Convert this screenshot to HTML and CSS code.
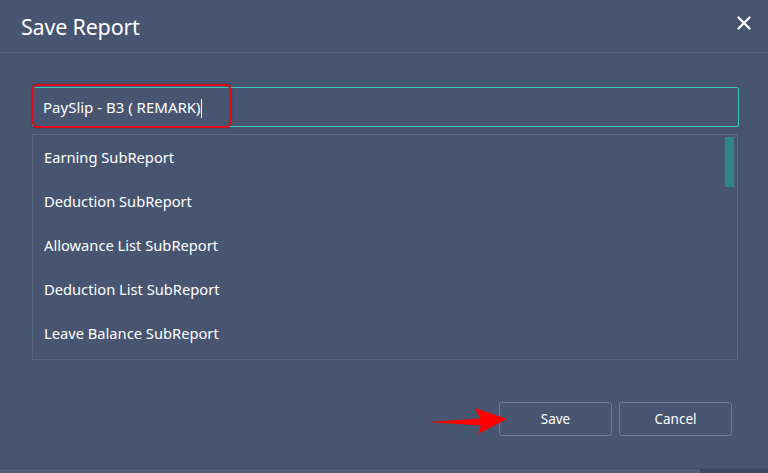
FILE: index.html
```html
<!DOCTYPE html>
<html lang="en">
<head>
    <meta charset="UTF-8">
    <meta name="viewport" content="width=device-width, initial-scale=1.0">
    <title>Save Report</title>
    <link rel="stylesheet" href="styles.css">
</head>
<body>
    <div class="dialog">
        <div class="dialog-header">
            <h2>Save Report</h2>
            <button class="close-btn" aria-label="Close">
                <svg width="14" height="14" viewBox="0 0 14 14">
                    <path d="M1.5 1.5 L12.5 12.5 M12.5 1.5 L1.5 12.5" stroke="#fff" stroke-width="2.2" stroke-linecap="round"/>
                </svg>
            </button>
        </div>

        <div class="dialog-body">
            <div class="name-field">
                <input type="text" class="name-input" value="PaySlip - B3 ( REMARK)">
                <span class="caret-text">PaySlip - B3 ( REMARK)<span class="caret"></span></span>
                <div class="highlight"></div>
            </div>

            <div class="report-list">
                <ul class="report-items">
                    <li>Earning SubReport</li>
                    <li>Deduction SubReport</li>
                    <li>Allowance List SubReport</li>
                    <li>Deduction List SubReport</li>
                    <li>Leave Balance SubReport</li>
                </ul>
                <div class="scroll-thumb"></div>
            </div>
        </div>

        <div class="dialog-footer">
            <div class="save-wrap">
                <svg class="arrow" width="80" height="30" viewBox="0 0 80 30">
                    <path d="M0 16 L52 12.5 L47 2 L79 13 L50 28 L53 19.5 Z" fill="#f00"/>
                </svg>
                <button class="btn">Save</button>
            </div>
            <button class="btn">Cancel</button>
        </div>
    </div>
    <div class="bottom-strip"><span class="strip-end"></span></div>
</body>
</html>
```

FILE: styles.css
```css
html, body {
    margin: 0;
    padding: 0;
    height: 100%;
}
body {
    font-family: "Noto Sans", "Open Sans", sans-serif;
    background: #475570;
    color: #fff;
    overflow: hidden;
    display: flex;
    flex-direction: column;
}
.dialog {
    flex: 1;
    display: flex;
    flex-direction: column;
}
.dialog-header {
    height: 53px;
    border-bottom: 1px solid #5a6983;
    display: flex;
    align-items: center;
    justify-content: space-between;
    padding: 0 17px 0 21px;
    box-sizing: border-box;
}
.dialog-header h2 {
    margin: 0;
    font-size: 21.5px;
    font-weight: 400;
    letter-spacing: -0.2px;
}
.close-btn {
    background: none;
    border: none;
    padding: 0;
    margin-top: -7px;
    cursor: pointer;
    display: flex;
}
.dialog-body {
    padding: 34px 29px 0 32px;
}
.name-field {
    position: relative;
    height: 40px;
}
.name-input {
    width: 100%;
    height: 40px;
    box-sizing: border-box;
    background: transparent;
    border: 1px solid #3ec6b6;
    border-radius: 2px;
    color: transparent;
    font: inherit;
    outline: none;
}
.caret-text {
    position: absolute;
    left: 11px;
    top: 10px;
    font-size: 15px;
    line-height: 20px;
    color: #fff;
    pointer-events: none;
}
.caret {
    display: inline-block;
    width: 1px;
    height: 19px;
    background: #fff;
    vertical-align: -5px;
}
.highlight {
    position: absolute;
    left: 0;
    top: -3px;
    width: 199px;
    height: 44px;
    box-sizing: border-box;
    border: 2px solid #e2071a;
    border-radius: 5px;
    box-shadow: 0 0 3px rgba(0,0,0,0.25);
}
.report-list {
    position: relative;
    margin-top: 7px;
    height: 226px;
    border: 1px solid #5a6882;
    box-sizing: border-box;
    margin-right: 1px;
}
.report-items {
    list-style: none;
    margin: 0;
    padding: 0;
}
.report-items li {
    height: 44px;
    line-height: 44px;
    padding-left: 11px;
    font-size: 14.7px;
}
.scroll-thumb {
    position: absolute;
    right: 3px;
    top: 2px;
    width: 9px;
    height: 50px;
    background: #2e8686;
}
.dialog-footer {
    margin-top: auto;
    display: flex;
    justify-content: flex-end;
    gap: 7px;
    padding: 0 36px 32px 0;
}
.save-wrap {
    position: relative;
}
.btn {
    width: 113px;
    height: 34px;
    background: transparent;
    border: 1px solid #6f7d97;
    border-radius: 3px;
    color: #fff;
    font-family: inherit;
    font-size: 13.5px;
    cursor: pointer;
}
.arrow {
    position: absolute;
    left: -71px;
    top: 4px;
}
.bottom-strip {
    height: 4px;
    background: #515f78;
    border-top: 1px solid #3f4c64;
    display: flex;
    justify-content: flex-end;
}
.strip-end {
    width: 68px;
    background: #3b475e;
}
```
